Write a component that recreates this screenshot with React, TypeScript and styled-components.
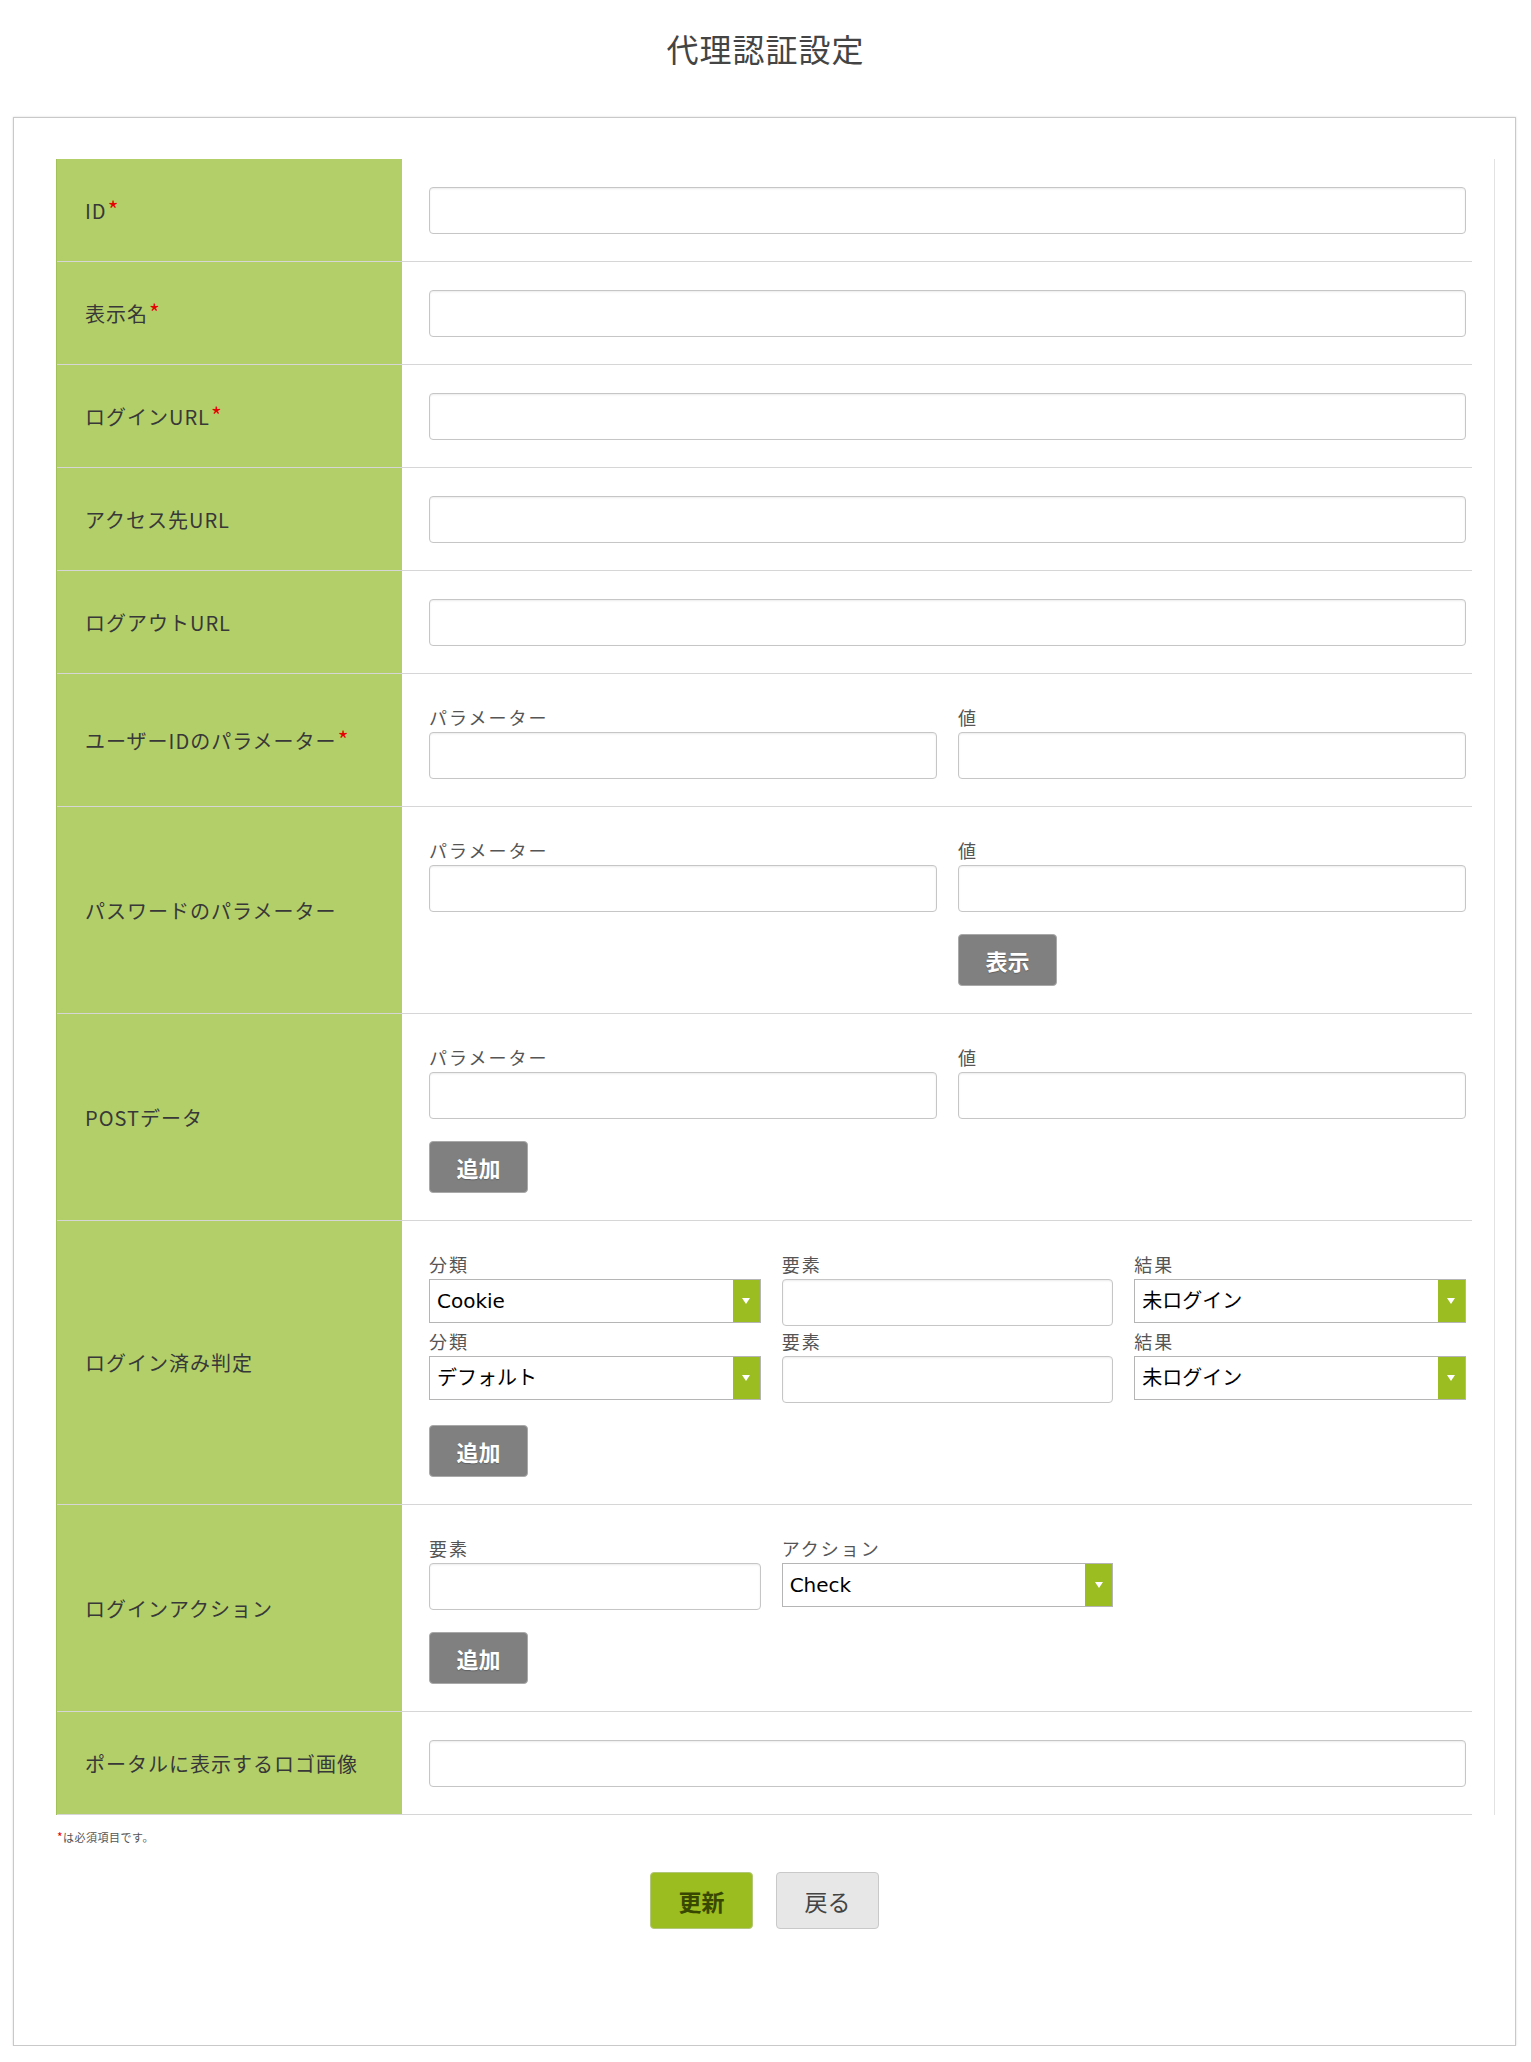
import React from "react";
import styled, { createGlobalStyle } from "styled-components";

const GlobalStyle = createGlobalStyle`
  body {
    margin: 0;
    background: #fff;
    font-family: "Noto Sans CJK JP", "Noto Sans", sans-serif;
    color: #333;
  }
`;

const Title = styled.h1`
  margin: 0;
  padding-top: 24px;
  line-height: 48px;
  font-size: 32px;
  font-weight: 400;
  color: #444;
  text-align: center;
  letter-spacing: 1px;
`;

const Card = styled.div`
  margin: 45px 15px 0 13px;
  padding: 41px 20px 116px 20px;
  border: 1px solid #c9c9c9;
  box-shadow: 0 0 2px rgba(0, 0, 0, 0.15);
  background: #fff;
`;

const Body = styled.div`
  padding-left: 22px;
`;

const Frame = styled.div`
  padding-right: 22px;
  border-right: 1px solid #e2e2e2;
`;

const FormTable = styled.table`
  width: 100%;
  border-collapse: collapse;
  table-layout: fixed;
`;

const Row = styled.tr`
  border-bottom: 1px solid #d6d6d6;
`;

const HeadCell = styled.th`
  width: 317px;
  padding: 0 0 0 28px;
  background: #b3cf6a;
  border-left: 1px solid #a2c158;
  text-align: left;
  vertical-align: middle;
  font-size: 20px;
  font-weight: 400;
  letter-spacing: 1px;
  color: #383838;
`;

const Required = styled.span<{ $small?: boolean }>`
  color: #e60000;
  margin-left: 1px;
  font-size: ${(p) => (p.$small ? "12px" : "23px")};
  line-height: 1;
`;

const ValueCell = styled.td`
  padding: 28px 6px 27px 27px;
  vertical-align: top;
`;

const TextInput = styled.input`
  display: block;
  box-sizing: border-box;
  width: 100%;
  height: 47px;
  margin: 0;
  padding: 0 10px;
  border: 1px solid #c6c6c6;
  border-radius: 4px;
  box-shadow: inset 0 1px 2px rgba(0, 0, 0, 0.08);
  background: #fff;
  font-family: "DejaVu Sans", "Noto Sans CJK JP", sans-serif;
  font-size: 20px;
  outline: none;
`;

const FieldGrid = styled.div<{ $cols: number }>`
  display: grid;
  grid-template-columns: repeat(${(p) => p.$cols}, 1fr);
  column-gap: 21px;
  align-items: start;
`;

const FieldLabel = styled.div`
  height: 30px;
  line-height: 30px;
  font-size: 18px;
  letter-spacing: 2px;
  color: #555;
  white-space: nowrap;
`;

const Field = styled.div`
  display: flex;
  flex-direction: column;
`;

const SelectBox = styled.div`
  display: flex;
  box-sizing: border-box;
  height: 44px;
  border: 1px solid #b5b5b5;
  background: #fff;
`;

const NativeSelect = styled.select`
  flex: 1;
  min-width: 0;
  appearance: none;
  border: none;
  background: transparent;
  padding: 0 7px;
  margin: 0;
  font-family: "DejaVu Sans", "Noto Sans CJK JP", sans-serif;
  font-size: 20px;
  color: #000;
  outline: none;
`;

const ArrowBox = styled.span`
  width: 27px;
  flex: none;
  display: flex;
  align-items: center;
  justify-content: center;
  background: #9bbd22;
`;

const GrayButton = styled.button`
  display: block;
  box-sizing: border-box;
  width: 99px;
  height: 52px;
  margin-top: 22px;
  padding: 0;
  border: 1px solid #a9a9a9;
  border-radius: 4px;
  background: #808080;
  color: #fff;
  font-family: "Noto Sans CJK JP", sans-serif;
  font-size: 22px;
  font-weight: 700;
  text-shadow: 0 1px 1px rgba(0, 0, 0, 0.25);
  cursor: pointer;
`;

const Note = styled.p`
  margin: 14px 0 0;
  font-size: 11px;
  line-height: 16px;
  color: #555;
  letter-spacing: 0.5px;
`;

const Actions = styled.div`
  display: flex;
  justify-content: center;
  gap: 23px;
  margin-top: 27px;
`;

const ActionButton = styled.button<{ $primary?: boolean }>`
  box-sizing: border-box;
  width: 103px;
  height: 57px;
  padding: 0;
  border: 1px solid ${(p) => (p.$primary ? "#b3c77a" : "#c9c9c9")};
  border-radius: 4px;
  background: ${(p) => (p.$primary ? "#9cbd1f" : "#e7e7e7")};
  color: ${(p) => (p.$primary ? "#384800" : "#444")};
  font-family: "Noto Sans CJK JP", sans-serif;
  font-size: 23px;
  font-weight: ${(p) => (p.$primary ? 700 : 400)};
  cursor: pointer;
`;

function Select({ value, options }: { value: string; options: string[] }) {
  return (
    <SelectBox>
      <NativeSelect defaultValue={value}>
        {options.map((o) => (
          <option key={o}>{o}</option>
        ))}
      </NativeSelect>
      <ArrowBox>
        <svg width="10" height="8" viewBox="0 0 10 8">
          <path d="M1 1h8L5 7z" fill="#fff" />
        </svg>
      </ArrowBox>
    </SelectBox>
  );
}

function Label({ text, required }: { text: string; required?: boolean }) {
  return (
    <HeadCell>
      {text}
      {required && <Required>*</Required>}
    </HeadCell>
  );
}

const kindOptions = ["Cookie", "デフォルト", "URL"];
const resultOptions = ["未ログイン", "ログイン済み"];

export default function App() {
  const simpleRows: { label: string; required?: boolean }[] = [
    { label: "ID", required: true },
    { label: "表示名", required: true },
    { label: "ログインURL", required: true },
    { label: "アクセス先URL" },
    { label: "ログアウトURL" },
  ];

  return (
    <>
      <GlobalStyle />
      <Title>代理認証設定</Title>
      <Card>
        <Body>
          <Frame>
            <FormTable>
              <tbody>
                {simpleRows.map((r) => (
                  <Row key={r.label}>
                    <Label text={r.label} required={r.required} />
                    <ValueCell>
                      <TextInput type="text" />
                    </ValueCell>
                  </Row>
                ))}

                <Row>
                  <Label text="ユーザーIDのパラメーター" required />
                  <ValueCell>
                    <FieldGrid $cols={2}>
                      <Field>
                        <FieldLabel>パラメーター</FieldLabel>
                        <TextInput type="text" />
                      </Field>
                      <Field>
                        <FieldLabel>値</FieldLabel>
                        <TextInput type="text" />
                      </Field>
                    </FieldGrid>
                  </ValueCell>
                </Row>

                <Row>
                  <Label text="パスワードのパラメーター" />
                  <ValueCell>
                    <FieldGrid $cols={2}>
                      <Field>
                        <FieldLabel>パラメーター</FieldLabel>
                        <TextInput type="text" />
                      </Field>
                      <Field>
                        <FieldLabel>値</FieldLabel>
                        <TextInput type="password" />
                        <GrayButton type="button">表示</GrayButton>
                      </Field>
                    </FieldGrid>
                  </ValueCell>
                </Row>

                <Row>
                  <Label text="POSTデータ" />
                  <ValueCell>
                    <FieldGrid $cols={2}>
                      <Field>
                        <FieldLabel>パラメーター</FieldLabel>
                        <TextInput type="text" />
                      </Field>
                      <Field>
                        <FieldLabel>値</FieldLabel>
                        <TextInput type="text" />
                      </Field>
                    </FieldGrid>
                    <GrayButton type="button">追加</GrayButton>
                  </ValueCell>
                </Row>

                <Row>
                  <Label text="ログイン済み判定" />
                  <ValueCell>
                    <FieldGrid $cols={3}>
                      <FieldLabel>分類</FieldLabel>
                      <FieldLabel>要素</FieldLabel>
                      <FieldLabel>結果</FieldLabel>
                      <Select value="Cookie" options={kindOptions} />
                      <TextInput type="text" />
                      <Select value="未ログイン" options={resultOptions} />
                      <FieldLabel>分類</FieldLabel>
                      <FieldLabel>要素</FieldLabel>
                      <FieldLabel>結果</FieldLabel>
                      <Select value="デフォルト" options={kindOptions} />
                      <TextInput type="text" />
                      <Select value="未ログイン" options={resultOptions} />
                    </FieldGrid>
                    <GrayButton type="button">追加</GrayButton>
                  </ValueCell>
                </Row>

                <Row>
                  <Label text="ログインアクション" />
                  <ValueCell>
                    <FieldGrid $cols={3}>
                      <FieldLabel>要素</FieldLabel>
                      <FieldLabel>アクション</FieldLabel>
                      <span />
                      <TextInput type="text" />
                      <Select value="Check" options={["Check", "Click", "Input"]} />
                    </FieldGrid>
                    <GrayButton type="button">追加</GrayButton>
                  </ValueCell>
                </Row>

                <Row>
                  <Label text="ポータルに表示するロゴ画像" />
                  <ValueCell>
                    <TextInput type="text" />
                  </ValueCell>
                </Row>
              </tbody>
            </FormTable>
          </Frame>
          <Note>
            <Required $small>*</Required>は必須項目です。
          </Note>
        </Body>
        <Actions>
          <ActionButton type="button" $primary>
            更新
          </ActionButton>
          <ActionButton type="button">戻る</ActionButton>
        </Actions>
      </Card>
    </>
  );
}
